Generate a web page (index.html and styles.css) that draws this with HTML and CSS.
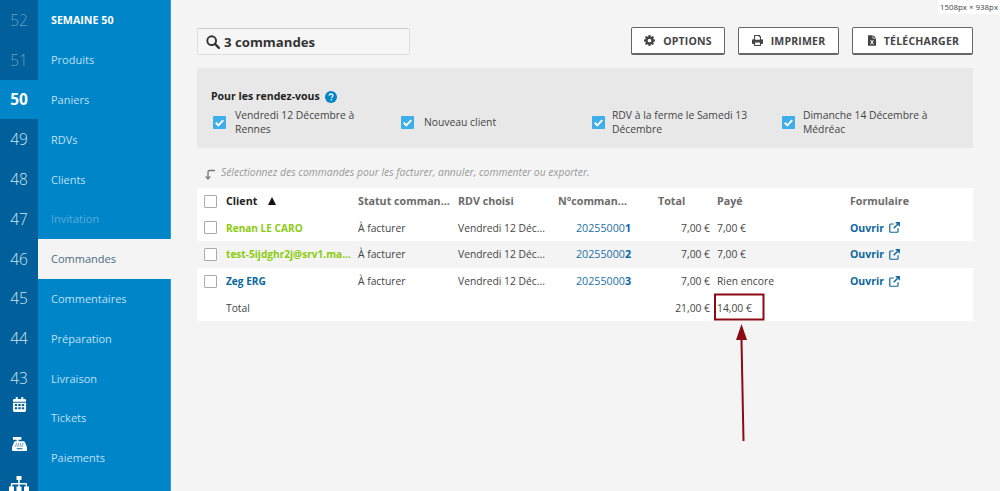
FILE: index.html
```html
<!DOCTYPE html>
<html lang="fr">
<head>
<meta charset="utf-8">
<title>Commandes</title>
<link rel="stylesheet" href="styles.css">
</head>
<body>
<div class="app">
  <div class="rail">
    <div class="wk dim">52</div>
    <div class="wk dim">51</div>
    <div class="wk on">50</div>
    <div class="wk">49</div>
    <div class="wk">48</div>
    <div class="wk">47</div>
    <div class="wk">46</div>
    <div class="wk">45</div>
    <div class="wk">44</div>
    <div class="wk short">43</div>
    <div class="ric"><svg viewBox="0 0 16 16"><path d="M1 6h14v8.500a1.500 1.500 0 0 1-1.500 1.500h-11A1.500 1.500 0 0 1 1 14.500zM2.500 2H4V0h2v2h4V0h2v2h1.500A1.500 1.500 0 0 1 15 3.500V5H1V3.500A1.500 1.500 0 0 1 2.500 2z" fill="#fff"/><path d="M3 7.500h2.500v2H3zM6.800 7.500h2.500v2H6.800zM10.500 7.500H13v2h-2.500zM3 11h2.500v2H3zM6.800 11h2.500v2H6.800zM10.500 11H13v2h-2.500z" fill="#00609b"/></svg></div>
    <div class="ric"><svg viewBox="0 0 16 16"><path d="M1 1h9v3H7v1.500h5.500c.6 0 1 .3 1.200.8L16 12v3a1 1 0 0 1-1 1H1a1 1 0 0 1-1-1v-3l2.300-5.700c.2-.5.6-.8 1.200-.8H5V4H1z" fill="#fff"/><path d="M4 8h1.200v1H4zM6.300 8h1.200v1H6.300zM8.600 8h1.200v1H8.600zM10.900 8h1.200v1h-1.200zM3.400 10.200h1.200v1H3.400zM5.700 10.200h1.200v1H5.700zM8 10.200h1.200v1H8zM10.300 10.200h1.200v1h-1.200zM5 13h6v1H5z" fill="#00609b"/></svg></div>
    <div class="ric"><svg viewBox="0 0 20 16"><path d="M7.500 0h5v4h-1.700v3H17a1 1 0 0 1 1 1v2.500h2V16h-5v-5.500h1.700V8.400h-6V10.500h1.800V16h-5v-5.500h1.800V8.400h-6V10.500H5V16H0v-5.500h1.800V8a1 1 0 0 1 1-1h6.400V4H7.500z" fill="#fff"/></svg></div>
  </div>
  <nav class="nav">
    <div class="item head">SEMAINE 50</div>
    <div class="item">Produits</div>
    <div class="item">Paniers</div>
    <div class="item">RDVs</div>
    <div class="item">Clients</div>
    <div class="item faded">Invitation</div>
    <div class="item active">Commandes</div>
    <div class="item">Commentaires</div>
    <div class="item">Préparation</div>
    <div class="item">Livraison</div>
    <div class="item">Tickets</div>
    <div class="item">Paiements</div>
  </nav>
  <main class="main">
    <div class="top">
      <div class="search">
        <svg class="ic-search" viewBox="0 0 16 16"><circle cx="6.500" cy="6.500" r="5" fill="none" stroke="#333" stroke-width="2.200"/><path d="M10.200 10.200l4.500 4.500" stroke="#333" stroke-width="2.600" stroke-linecap="round"/></svg>
        <span>3 commandes</span>
      </div>
      <div class="actions">
        <div class="btn b1"><svg viewBox="0 0 16 16"><path fill-rule="evenodd" d="M6.700 0h2.600l.4 2.100 1.200.5 1.800-1.200 1.900 1.900-1.200 1.800.5 1.200 2.100.4v2.600l-2.100.4-.5 1.200 1.200 1.800-1.900 1.900-1.800-1.200-1.200.5-.4 2.100H6.700l-.4-2.100-1.200-.5-1.800 1.200-1.900-1.900 1.200-1.800-.5-1.200L0 9.300V6.700l2.100-.4.5-1.200-1.200-1.800 1.900-1.900 1.800 1.200 1.200-.5zM8 5.300a2.700 2.700 0 1 0 0 5.400 2.700 2.700 0 0 0 0-5.400z" fill="#444"/></svg>OPTIONS</div>
        <div class="btn b2"><svg viewBox="0 0 16 16"><path fill-rule="evenodd" d="M3 0h8l2 2v4h1.500A1.500 1.500 0 0 1 16 7.500V12a1 1 0 0 1-1 1h-2v3H3v-3H1a1 1 0 0 1-1-1V7.500A1.500 1.500 0 0 1 1.500 6H3zm1.500 1.500V7h7V3h-1.500V1.500zM4.500 11v3.500h7V11z" fill="#444"/></svg>IMPRIMER</div>
        <div class="btn b3"><svg class="narrow" viewBox="0 0 12 16"><path fill-rule="evenodd" d="M0 0h7v5h5v11H0zM8 0l4 4H8zM3.200 7.500l1.900 3-1.900 3h1.700L6 11.700l1.100 1.800h1.700l-1.900-3 1.900-3H7.100L6 9.300 4.900 7.500z" fill="#444"/></svg>TÉLÉCHARGER</div>
      </div>
    </div>
    <section class="panel">
      <div class="panel-title">Pour les rendez-vous <svg class="help" viewBox="0 0 16 16"><circle cx="8" cy="8" r="8" fill="#0085c9"/><path d="M5.500 6.200C5.600 4.700 6.700 4 8.100 4c1.500 0 2.500.9 2.500 2.100 0 1.900-2 1.800-2 3.300" fill="none" stroke="#fff" stroke-width="1.700"/><rect x="7.500" y="10.600" width="2" height="2" fill="#fff"/></svg></div>
      <div class="checks">
        <label class="chk c1"><span class="box"><svg viewBox="0 0 14 14"><path d="M3 7.300l2.800 2.800L11 4.500" fill="none" stroke="#fff" stroke-width="2.200"/></svg></span><span class="lab">Vendredi 12 Décembre à Rennes</span></label>
        <label class="chk c2"><span class="box"><svg viewBox="0 0 14 14"><path d="M3 7.300l2.800 2.800L11 4.500" fill="none" stroke="#fff" stroke-width="2.200"/></svg></span><span class="lab">Nouveau client</span></label>
        <label class="chk c3"><span class="box"><svg viewBox="0 0 14 14"><path d="M3 7.300l2.800 2.800L11 4.500" fill="none" stroke="#fff" stroke-width="2.200"/></svg></span><span class="lab">RDV à la ferme le Samedi 13 Décembre</span></label>
        <label class="chk c4"><span class="box"><svg viewBox="0 0 14 14"><path d="M3 7.300l2.800 2.800L11 4.500" fill="none" stroke="#fff" stroke-width="2.200"/></svg></span><span class="lab">Dimanche 14 Décembre à Médréac</span></label>
      </div>
    </section>
    <div class="hint"><svg viewBox="0 0 12 12"><path d="M11 2.500H5.500Q4 2.500 4 4v7" fill="none" stroke="#777" stroke-width="1.300"/><path d="M1.800 8.300L4 11l2.200-2.700" fill="none" stroke="#777" stroke-width="1.200"/></svg><em>Sélectionnez des commandes pour les facturer, annuler, commenter ou exporter.</em></div>
    <table class="orders">
      <colgroup><col class="k0"><col class="k1"><col class="k2"><col class="k3"><col class="k4"><col class="k5"><col class="k6"><col class="k7"></colgroup>
      <thead>
        <tr>
          <th><span class="cb"></span></th>
          <th class="dark">Client <span class="sort"></span></th>
          <th>Statut comman...</th>
          <th>RDV choisi</th>
          <th>N°comman...</th>
          <th class="tot-h">Total</th>
          <th class="pay">Payé</th>
          <th>Formulaire</th>
        </tr>
      </thead>
      <tbody>
        <tr>
          <td><span class="cb"></span></td>
          <td class="name green">Renan LE CARO</td>
          <td>À facturer</td>
          <td>Vendredi 12 Déc...</td>
          <td class="num">20255000<b>1</b></td>
          <td class="amt">7,00 €</td>
          <td class="pay">7,00 €</td>
          <td><a class="open">Ouvrir <svg viewBox="0 0 14 14"><path d="M6 2.500H2A1 1 0 0 0 1 3.500V12a1 1 0 0 0 1 1h8.500a1 1 0 0 0 1-1V8" fill="none" stroke="#0a669f" stroke-width="1.500"/><path d="M8.500 1H13v4.500M13 1L6 8" fill="none" stroke="#0a669f" stroke-width="1.800"/></svg></a></td>
        </tr>
        <tr class="alt">
          <td><span class="cb"></span></td>
          <td class="name green">test-5ijdghr2j@srv1.ma...</td>
          <td>À facturer</td>
          <td>Vendredi 12 Déc...</td>
          <td class="num">20255000<b>2</b></td>
          <td class="amt">7,00 €</td>
          <td class="pay">7,00 €</td>
          <td><a class="open">Ouvrir <svg viewBox="0 0 14 14"><path d="M6 2.500H2A1 1 0 0 0 1 3.500V12a1 1 0 0 0 1 1h8.500a1 1 0 0 0 1-1V8" fill="none" stroke="#0a669f" stroke-width="1.500"/><path d="M8.500 1H13v4.500M13 1L6 8" fill="none" stroke="#0a669f" stroke-width="1.800"/></svg></a></td>
        </tr>
        <tr>
          <td><span class="cb"></span></td>
          <td class="name blue">Zeg ERG</td>
          <td>À facturer</td>
          <td>Vendredi 12 Déc...</td>
          <td class="num">20255000<b>3</b></td>
          <td class="amt">7,00 €</td>
          <td class="pay">Rien encore</td>
          <td><a class="open">Ouvrir <svg viewBox="0 0 14 14"><path d="M6 2.500H2A1 1 0 0 0 1 3.500V12a1 1 0 0 0 1 1h8.500a1 1 0 0 0 1-1V8" fill="none" stroke="#0a669f" stroke-width="1.500"/><path d="M8.500 1H13v4.500M13 1L6 8" fill="none" stroke="#0a669f" stroke-width="1.800"/></svg></a></td>
        </tr>
        <tr>
          <td></td>
          <td>Total</td>
          <td></td>
          <td></td>
          <td></td>
          <td class="amt">21,00 €</td>
          <td class="pay">14,00 €</td>
          <td></td>
        </tr>
      </tbody>
    </table>
  </main>
</div>
<svg class="note" viewBox="0 0 1000 491"><rect x="715" y="294.500" width="48.500" height="25" fill="none" stroke="#8b0a14" stroke-width="2"/><path d="M743.500 441L741.500 340" fill="none" stroke="#8b0a14" stroke-width="2"/><path d="M741.500 324l5.500 16h-11z" fill="#8b0a14"/></svg>
<div class="dims">1508px × 938px</div>
</body>
</html>
```
FILE: styles.css
```css
* { box-sizing: border-box; }
html, body { margin: 0; height: 491px; overflow: hidden; }
body { font-family: "Open Sans", sans-serif; font-size: 11px; color: #444; background: #f4f4f4; position: relative; }
.app { display: flex; height: 491px; }

.rail { width: 38px; flex: none; background: #00609b; overflow: hidden; height: 491px; }
.wk { height: 39.8px; display: flex; align-items: center; justify-content: center; font-size: 15.500px; font-weight: 300; color: #d3e3ee; }
.wk.short { height: 26px; padding-top: 13px; }
.wk.dim { color: #6d9fc1; }
.wk.on { background: #0085c9; color: #fff; font-weight: 700; }
.ric { height: 39.8px; display: flex; align-items: center; justify-content: center; }
.ric svg { width: 15px; height: 15px; display: block; }
.ric:last-child svg { width: 20px; height: 16px; }

.nav { width: 133px; flex: none; background: #0085c9; border-right: 1px solid #2d9ad3; height: 491px; }
.item { height: 39.8px; display: flex; align-items: center; padding-left: 13px; color: #bfe0f3; }
.item.head { color: #fff; font-weight: 700; font-size: 10.700px; }
.item.faded { color: #58aeda; }
.item.active { background: #f4f4f4; color: #4a6b80; margin-right: -1px; }

.main { flex: 1; padding: 27px 27px 0 26px; min-width: 0; }
.top { display: flex; justify-content: space-between; align-items: flex-start; height: 41px; }
.search { width: 213px; height: 27px; margin-top: 1px; border: 1px solid #ddd; border-top-color: #ccc; border-radius: 2px; background: #f6f6f6; display: flex; align-items: center; padding-left: 8px; gap: 4px; font-size: 13.200px; font-weight: 700; color: #333; }
.ic-search { width: 14px; height: 14px; }
.actions { display: flex; gap: 13px; }
.btn { height: 28px; background: #fff; border: 1px solid #666; border-bottom-width: 2px; border-radius: 2px; display: flex; align-items: center; justify-content: center; gap: 8px; font-size: 10.500px; font-weight: 700; color: #444; letter-spacing: .2px; }
.btn svg { width: 11px; height: 11px; }
.btn svg.narrow { width: 8px; }
.b1 { width: 94px; }
.b2 { width: 101px; }
.b3 { width: 121px; padding-left: 2px; }

.panel { height: 80px; background: #e8e8e8; border-radius: 3px; padding: 22px 14px 0; }
.panel-title { font-size: 10.500px; font-weight: 700; color: #222; display: flex; align-items: center; gap: 5px; line-height: 13px; }
.help { width: 12px; height: 12px; }
.checks { display: flex; margin-top: 6px; }
.chk { display: flex; align-items: center; font-size: 10.350px; line-height: 13.500px; color: #444; }
.box { width: 13px; height: 13px; flex: none; background: #3eaeeb; border-radius: 1px; margin-left: 2px; }
.box svg { display: block; width: 13px; height: 13px; }
.lab { padding-left: 9px; }
.c1 { width: 189px; }
.c2 { width: 191px; }
.c3 { width: 190px; }
.c4 { width: 180px; }
.c1 .lab { width: 140px; }
.c2 .lab { padding-left: 10px; }
.c3 { width: 190px; margin-left: 1px; }
.c3 .lab { width: 170px; padding-left: 7px; }
.c4 { margin-left: 1px; }
.c4 .lab { padding-left: 8px; }

.hint { height: 40px; display: flex; align-items: flex-start; padding: 17px 0 0 7px; color: #999; font-size: 10.350px; line-height: 14px; }
.hint svg { width: 12px; height: 12px; margin: 3px 5px 0 0; }

.orders { width: 776px; border-collapse: collapse; table-layout: fixed; background: #fff; }
.k0 { width: 22px; }
.k1 { width: 132px; }
.k2 { width: 100px; }
.k3 { width: 100px; }
.k4 { width: 100px; }
.k5 { width: 63px; }
.k6 { width: 129px; }
.k7 { width: 130px; }
.orders th, .orders td { height: 26.600px; padding: 0 7px; text-align: left; white-space: nowrap; overflow: hidden; font-size: 10.300px; }
.orders th { font-size: 10.700px; font-weight: 700; color: #6b6b6b; }
.orders th.dark { color: #222; }
.orders tr.alt td { background: #f4f4f4; }
.orders th:first-child, .orders td:first-child { padding: 0 0 0 7px; }
.orders .pay { padding-left: 3px; }
.orders .amt { text-align: right; padding-right: 4px; }
.orders .num { color: #1a70a8; font-size: 10.700px; text-align: right; padding-right: 20px; }
.orders .num b { color: #0a669f; }
.orders .name { font-weight: 700; font-size: 10.100px; padding-right: 0; }
.green { color: #8ccc10; }
.blue { color: #0a669f; }
.sort { display: inline-block; width: 0; height: 0; margin-left: 8px; border-left: 4.500px solid transparent; border-right: 4.500px solid transparent; border-bottom: 8px solid #111; }
.cb { display: block; width: 13px; height: 13px; background: #fff; border: 1px solid #aaa; border-radius: 1px; }
.open { display: flex; align-items: center; gap: 5px; font-weight: 700; font-size: 10.500px; color: #0a669f; }
.open svg { width: 11px; height: 11px; }

.note { position: absolute; left: 0; top: 0; width: 1000px; height: 491px; pointer-events: none; }
.dims { position: absolute; right: 0; top: 0; width: 62px; height: 14px; background: #fff; font-size: 7.900px; line-height: 15px; text-align: center; color: #444; }
```
